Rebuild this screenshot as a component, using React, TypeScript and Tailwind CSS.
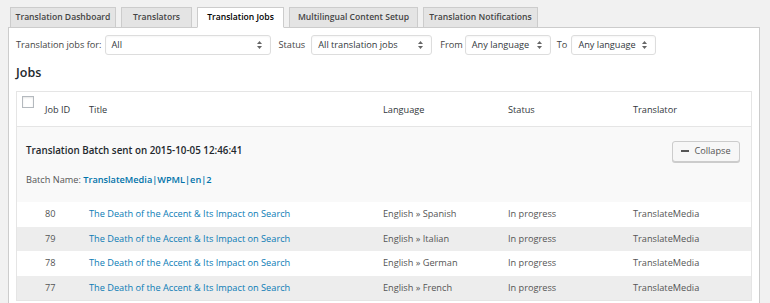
import React from "react";

const tabs = [
  { label: "Translation Dashboard", w: "w-[106px]" },
  { label: "Translators", w: "w-[71px]" },
  { label: "Translation Jobs", w: "w-[87px]", active: true },
  { label: "Multilingual Content Setup", w: "w-[129px]" },
  { label: "Translation Notifications", w: "w-[115px]" },
];

const rows = [
  { id: "80", lang: "English » Spanish" },
  { id: "79", lang: "English » Italian" },
  { id: "78", lang: "English » German" },
  { id: "77", lang: "English » French" },
];

function Arrows() {
  return (
    <svg width="5" height="8" viewBox="0 0 5 8" className="shrink-0">
      <path d="M2.5 0 L5 3 L0 3 Z" fill="#666" />
      <path d="M0 5 L5 5 L2.5 8 Z" fill="#666" />
    </svg>
  );
}

function Select({ value, w }: { value: string; w: string }) {
  return (
    <div
      className={`${w} h-[20px] flex items-center justify-between pl-[6px] pr-[8px] bg-white border border-[#dddddd] rounded-[3px] shadow-[inset_0_1px_2px_rgba(0,0,0,0.04)] text-[#32373c] whitespace-nowrap`}
    >
      <span>{value}</span>
      <Arrows />
    </div>
  );
}

export default function App() {
  return (
    <div
      className="w-[770px] h-[303px] overflow-hidden bg-[#f1f1f1] text-[9.2px] text-[#444]"
      style={{ fontFamily: '"Open Sans", "Noto Sans", sans-serif' }}
    >
      <div className="pl-[8px] pr-[10px]">
        {/* Tabs */}
        <div className="flex pl-[2px] pt-[7px] gap-[5px] h-[27px] items-end">
          {tabs.map((t) => (
            <div
              key={t.label}
              className={`${t.w} h-[20px] flex items-center justify-center border border-[#cccccc] font-semibold text-[8.6px] whitespace-nowrap ${
                t.active
                  ? "bg-white border-b-white text-[#000] relative top-[1px] h-[21px]"
                  : "bg-[#e4e4e4] border-b-0 text-[#444]"
              }`}
            >
              {t.label}
            </div>
          ))}
        </div>

        {/* Panel */}
        <div className="bg-white border border-[#cccccc] h-[290px] pl-[7px] pr-[7px]">
          {/* Filters */}
          <div className="flex items-center h-[19px] mt-[7px] text-[#444] whitespace-nowrap">
            <span className="mr-[3px]">Translation jobs for:</span>
            <Select value="All" w="w-[166px]" />
            <span className="ml-[8px] mr-[6px]">Status</span>
            <Select value="All translation jobs" w="w-[121px]" />
            <span className="ml-[8px] mr-[2px]">From</span>
            <Select value="Any language" w="w-[86px]" />
            <span className="ml-[6px] mr-[4px]">To</span>
            <Select value="Any language" w="w-[85px]" />
          </div>

          <h2 className="text-[12.5px] font-semibold text-[#23282d] mt-[11px] leading-[16px]">
            Jobs
          </h2>

          {/* Table */}
          <div className="mt-[10px] border border-[#e5e5e5] bg-white">
            {/* header */}
            <div className="flex h-[35px] border-b border-[#e5e5e5] text-[#32373c]">
              <div className="w-[28px] pl-[5px] pt-[4px]">
                <div className="w-[12px] h-[12px] border border-[#b4b9be] bg-white shadow-[inset_0_1px_2px_rgba(0,0,0,0.1)]" />
              </div>
              <div className="w-[44px] flex items-center pt-[2px]">Job ID</div>
              <div className="w-[294px] flex items-center pt-[2px]">Title</div>
              <div className="w-[125px] flex items-center pt-[2px]">Language</div>
              <div className="w-[125px] flex items-center pt-[2px]">Status</div>
              <div className="flex-1 flex items-center pt-[2px]">Translator</div>
            </div>

            {/* batch */}
            <div className="bg-[#f9f9f9] h-[75px] pl-[9px] pr-[11px] flex flex-col">
              <div className="flex items-center justify-between mt-[14px] h-[20px]">
                <span className="font-semibold text-[9.8px] text-[#23282d]">
                  Translation Batch sent on 2015-10-05 12:46:41
                </span>
                <div className="w-[68px] h-[21px] flex items-center justify-center gap-[5px] border border-[#cccccc] rounded-[3px] bg-[#f7f7f7] text-[#555] shadow-[0_1px_0_#cccccc]">
                  <span className="block w-[8px] h-[1.5px] bg-[#555]" />
                  <span>Collapse</span>
                </div>
              </div>
              <div className="mt-[12px] text-[#555]">
                Batch Name:{" "}
                <span className="font-semibold text-[#0073aa]">TranslateMedia|WPML|en|2</span>
              </div>
            </div>

            {rows.map((r, i) => (
              <div
                key={r.id}
                className={`flex items-center h-[24.5px] text-[#555] ${
                  i % 2 === 1 ? "bg-[#ededed]" : "bg-white"
                }`}
              >
                <div className="w-[28px]" />
                <div className="w-[44px]">{r.id}</div>
                <div className="w-[294px] text-[#0a7bb5]">
                  The Death of the Accent &amp; Its Impact on Search
                </div>
                <div className="w-[125px]">{r.lang}</div>
                <div className="w-[125px]">In progress</div>
                <div className="flex-1">TranslateMedia</div>
              </div>
            ))}
          </div>
        </div>
      </div>
    </div>
  );
}
